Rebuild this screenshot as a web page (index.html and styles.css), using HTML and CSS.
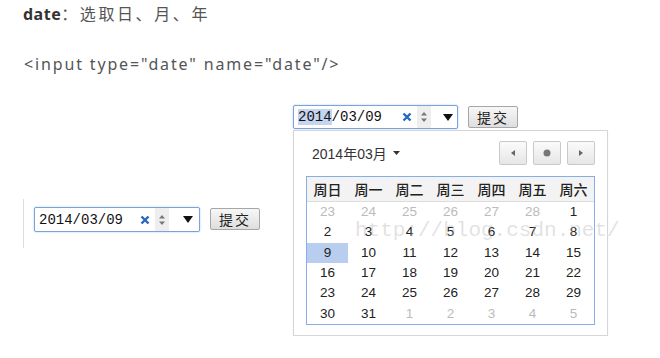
FILE: index.html
```html
<!DOCTYPE html>
<html lang="zh-CN">
<head>
  <meta charset="UTF-8" />
  <title>input type=date</title>
  <link rel="stylesheet" href="styles.css">
</head>
<body>
  <p class="title"><b>date</b>：选取日、月、年</p>
  <p class="code">&lt;input type="date" name="date"/&gt;</p>

  <div class="demo">
    <div class="side">
      <div class="field">
        <span class="value">2014/03/09</span>
        <span class="clear"><svg width="10" height="10" viewBox="0 0 10 10"><path d="M1.5 1.5 8.5 8.5M8.5 1.5 1.5 8.5" stroke="#2b65c2" stroke-width="2.4"/></svg></span>
        <span class="spin"><svg width="8" height="14" viewBox="0 0 8 14"><path d="M4 2 7 5.5H1zM4 12 1 8.5H7z" fill="#777"/></svg></span>
        <span class="drop"><svg width="10" height="7" viewBox="0 0 10 7"><path d="M0 0H10L5 7z" fill="#111"/></svg></span>
      </div>
      <button class="submit">提交</button>
    </div>

    <div class="open">
      <div class="row">
        <div class="field">
          <span class="value"><span class="sel">2014</span>/03/09</span>
          <span class="clear"><svg width="10" height="10" viewBox="0 0 10 10"><path d="M1.5 1.5 8.5 8.5M8.5 1.5 1.5 8.5" stroke="#2b65c2" stroke-width="2.4"/></svg></span>
          <span class="spin"><svg width="8" height="14" viewBox="0 0 8 14"><path d="M4 2 7 5.5H1zM4 12 1 8.5H7z" fill="#777"/></svg></span>
          <span class="drop"><svg width="10" height="7" viewBox="0 0 10 7"><path d="M0 0H10L5 7z" fill="#111"/></svg></span>
        </div>
        <button class="submit">提交</button>
      </div>

      <div class="picker">
        <div class="head">
          <span class="month">2014年03月 <svg width="7" height="4" viewBox="0 0 7 4"><path d="M0 0H7L3.5 4z" fill="#333"/></svg></span>
          <div class="nav">
            <span class="btn"><svg width="4" height="6" viewBox="0 0 4 6"><path d="M4 0V6L0 3z" fill="#666"/></svg></span>
            <span class="btn"><svg width="8" height="8" viewBox="0 0 8 8"><circle cx="4" cy="4" r="3.5" fill="#777"/></svg></span>
            <span class="btn"><svg width="4" height="6" viewBox="0 0 4 6"><path d="M0 0V6L4 3z" fill="#666"/></svg></span>
          </div>
        </div>

        <div class="cal">
          <span class="wk">周日</span><span class="wk">周一</span><span class="wk">周二</span><span class="wk">周三</span><span class="wk">周四</span><span class="wk">周五</span><span class="wk">周六</span>

          <span class="d off">23</span><span class="d off">24</span><span class="d off">25</span><span class="d off">26</span><span class="d off">27</span><span class="d off">28</span><span class="d">1</span>
          <span class="d">2</span><span class="d">3</span><span class="d">4</span><span class="d">5</span><span class="d">6</span><span class="d">7</span><span class="d">8</span>
          <span class="d today">9</span><span class="d">10</span><span class="d">11</span><span class="d">12</span><span class="d">13</span><span class="d">14</span><span class="d">15</span>
          <span class="d">16</span><span class="d">17</span><span class="d">18</span><span class="d">19</span><span class="d">20</span><span class="d">21</span><span class="d">22</span>
          <span class="d">23</span><span class="d">24</span><span class="d">25</span><span class="d">26</span><span class="d">27</span><span class="d">28</span><span class="d">29</span>
          <span class="d">30</span><span class="d">31</span><span class="d off">1</span><span class="d off">2</span><span class="d off">3</span><span class="d off">4</span><span class="d off">5</span>
        </div>
      </div>
    </div>
  </div>

  <div class="mark">http://blog.csdn.net/</div>
</body>
</html>
```

FILE: styles.css
```css
body { margin: 0; background: #fff; color: #555; font-family: "Noto Sans", "Noto Sans CJK SC", sans-serif; position: relative; }
p { margin: 0; }

.title { margin: 3px 0 0 23px; font-size: 16px; line-height: 22px; letter-spacing: 2.6px; }
.title b { color: #333; letter-spacing: 0.5px; }
.code { margin: 27px 0 0 24px; font-size: 16px; line-height: 24px; letter-spacing: 1.85px; }

.demo { display: flex; align-items: flex-start; margin-top: 29px; }
.side { display: flex; align-items: flex-start; gap: 10px; margin: 94px 0 0 23px; padding: 8px 0 16px 10px; border-left: 1px solid #ddd; }
.open { margin-left: 33px; }
.row { display: flex; gap: 10px; }

.field { box-sizing: border-box; width: 166px; height: 25px; display: flex; align-items: center; border: 1px solid #7aa3dc; border-radius: 2px; box-shadow: 0 0 2px #a9c4ee; background: #fff; }
.open .field { width: 165px; height: 24px; }
.value { font-family: "Liberation Mono", monospace; font-size: 14px; color: #111; padding-left: 4px; width: 101px; }
.open .value { width: 104px; }
.sel { background: #c3d5ef; }
.clear { display: flex; width: 10px; }
.spin { display: flex; align-items: center; justify-content: center; width: 14px; height: 23px; margin-left: 5px; background: #eee; }
.open .spin { height: 22px; }
.drop { display: flex; margin-left: 14px; }
.open .drop { margin-left: 12px; }

.submit { box-sizing: border-box; width: 50px; height: 22px; margin-top: 1px; padding: 0; border: 1px solid #a6a6a6; border-radius: 2px; background: linear-gradient(#f7f7f7, #dedede); font-family: "Noto Sans CJK SC", sans-serif; font-size: 14px; letter-spacing: 2px; color: #222; }

.picker { box-sizing: border-box; width: 315px; margin-top: 1px; padding: 10px 12px 10px; border: 1px solid #d6d6d6; background: #fff; box-shadow: 0 1px 2px rgba(0,0,0,0.06); }
.head { display: flex; justify-content: space-between; align-items: center; height: 24px; margin-bottom: 11px; }
.month { display: flex; align-items: center; gap: 6px; margin-left: 6px; font-family: "Liberation Sans", "Noto Sans CJK SC", sans-serif; font-size: 14px; color: #333; }
.nav { display: flex; gap: 6px; }
.btn { box-sizing: border-box; width: 28px; height: 24px; display: flex; align-items: center; justify-content: center; border: 1px solid #c9c9c9; border-radius: 2px; background: linear-gradient(#fbfbfb, #e6e6e6); }

.cal { display: grid; grid-template-columns: repeat(7, 1fr); border: 1px solid #86aee8; }
.wk { height: 24px; line-height: 24px; text-align: center; background: #f3f3f3; border-bottom: 1px solid #dcdcdc; font-family: "Noto Sans CJK SC", sans-serif; font-size: 14px; font-weight: 500; color: #222; }
.d { height: 20.33px; line-height: 20px; text-align: center; font-family: "Liberation Sans", sans-serif; font-size: 13.5px; color: #222; }
.d.off { color: #bbb; }
.d.today { background: #b9cdef; }

.mark { position: absolute; left: 355px; top: 219px; font-family: "Liberation Mono", monospace; font-size: 21px; color: rgba(170, 170, 170, 0.35); pointer-events: none; }
```
